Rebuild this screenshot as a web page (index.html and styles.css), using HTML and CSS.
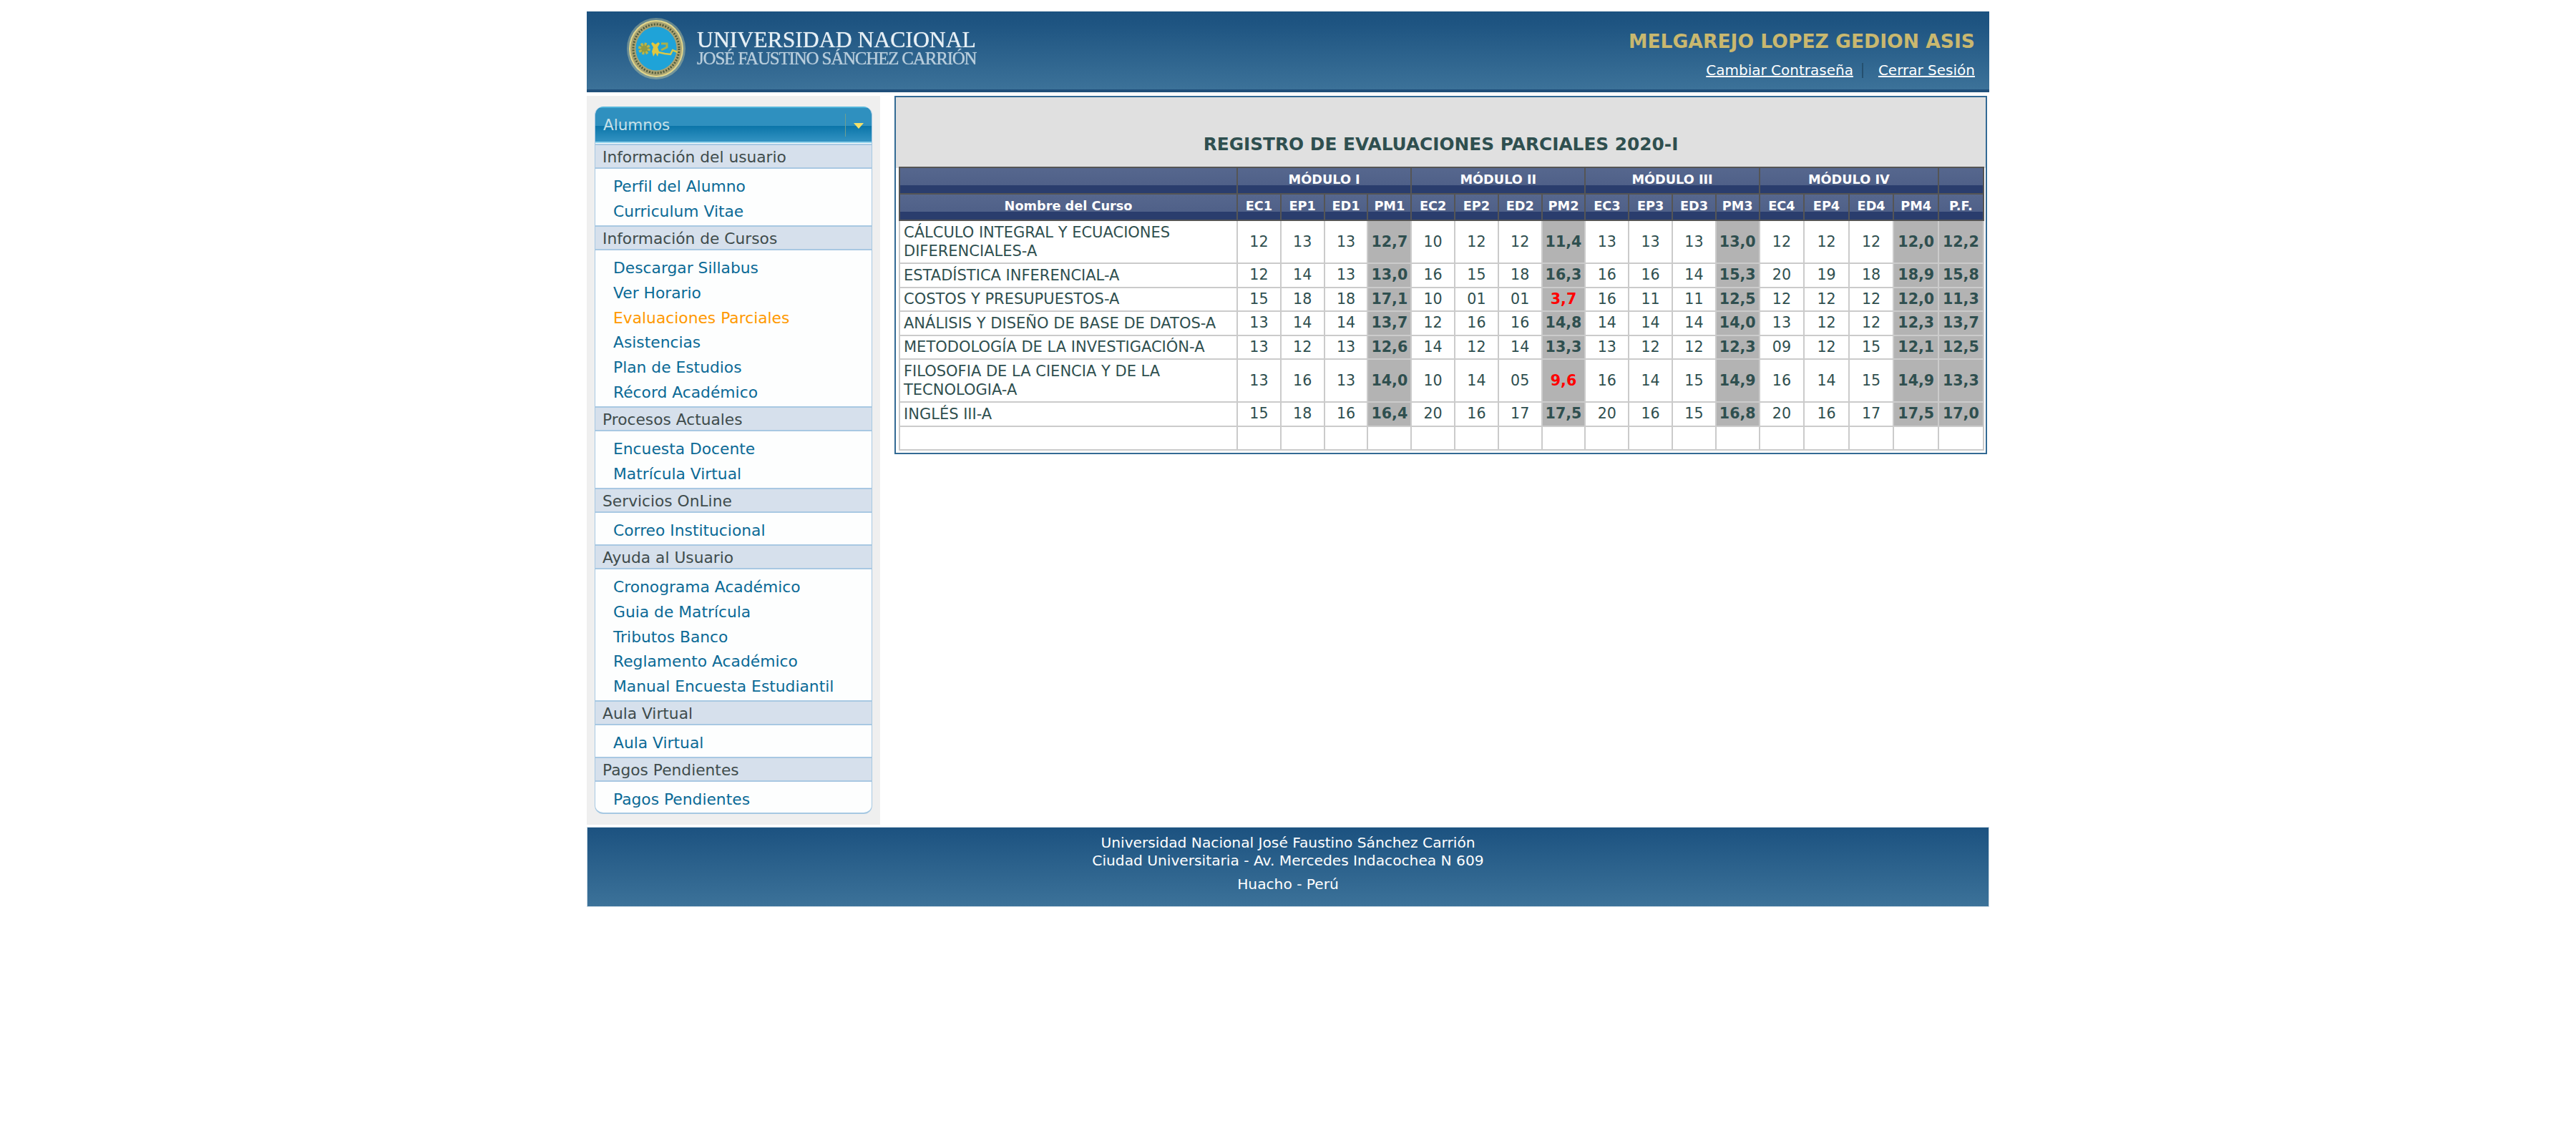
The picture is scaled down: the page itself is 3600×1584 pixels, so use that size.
FILE: index.html
```html
<!DOCTYPE html>
<html lang="es">
<head>
<meta charset="utf-8">
<title>Registro de Evaluaciones Parciales</title>
<link rel="stylesheet" href="styles.css">
</head>
<body>
<div class="page">
  <header class="top">
    <div class="brand">
      <svg class="seal" viewBox="0 0 84 88" width="84" height="88">
        <ellipse cx="42" cy="44" rx="41" ry="43" fill="#efe9a8" opacity=".35"/>
        <ellipse cx="42" cy="44" rx="38" ry="40" fill="#e2d68a"/>
        <ellipse cx="42" cy="44" rx="36" ry="38" fill="#a8a272"/>
        <ellipse cx="42" cy="44" rx="32" ry="34" fill="none" stroke="#4d5a3c" stroke-width="3" stroke-dasharray="2 2"/>
        <ellipse cx="42" cy="44" rx="28.5" ry="30.5" fill="#1fa3d8"/>
        <circle cx="25.5" cy="44" r="6.5" fill="#8f9a45" stroke="#b9b54a" stroke-width="4" stroke-dasharray="3 2"/>
        <path d="M37 35l4 3 4-3 2 2-3 5 2 6-2 7-3-5-3 5-2-7 2-6-3-5z" fill="#e0c63f"/>
        <path d="M49 37h8v5l-8 4" fill="none" stroke="#a9b04a" stroke-width="3"/>
        <path d="M45 49l9 2 8 1 3-6 7 3" fill="none" stroke="#d8c74a" stroke-width="2.5"/>
      </svg>
      <div class="brand-text">
        <div class="brand-one">UNIVERSIDAD NACIONAL</div>
        <div class="brand-two">JOSÉ FAUSTINO SÁNCHEZ CARRIÓN</div>
      </div>
    </div>
    <div class="user">
      <div class="user-name">MELGAREJO LOPEZ GEDION ASIS</div>
      <div class="user-links"><a href="#">Cambiar Contraseña</a><span class="sep"></span><a href="#">Cerrar Sesión</a></div>
    </div>
  </header>

  <div class="body">
    <aside class="side">
      <nav class="menu">
        <div class="menu-head"><span>Alumnos</span><i class="menu-div"></i><i class="menu-arrow"></i></div>
        <div class="sec">Información del usuario</div>
        <ul class="items"><li>Perfil del Alumno</li><li>Curriculum Vitae</li></ul>
        <div class="sec">Información de Cursos</div>
        <ul class="items"><li>Descargar Sillabus</li><li>Ver Horario</li><li class="on">Evaluaciones Parciales</li><li>Asistencias</li><li>Plan de Estudios</li><li>Récord Académico</li></ul>
        <div class="sec">Procesos Actuales</div>
        <ul class="items"><li>Encuesta Docente</li><li>Matrícula Virtual</li></ul>
        <div class="sec">Servicios OnLine</div>
        <ul class="items"><li>Correo Institucional</li></ul>
        <div class="sec">Ayuda al Usuario</div>
        <ul class="items"><li>Cronograma Académico</li><li>Guia de Matrícula</li><li>Tributos Banco</li><li>Reglamento Académico</li><li>Manual Encuesta Estudiantil</li></ul>
        <div class="sec">Aula Virtual</div>
        <ul class="items"><li>Aula Virtual</li></ul>
        <div class="sec">Pagos Pendientes</div>
        <ul class="items last"><li>Pagos Pendientes</li></ul>
      </nav>
    </aside>

    <main class="panel">
      <h1 class="title">REGISTRO DE EVALUACIONES PARCIALES 2020-I</h1>
      <table class="grades">
        <colgroup>
          <col class="c-name">
          <col class="c-a"><col class="c-a"><col class="c-a"><col class="c-a">
          <col class="c-a"><col class="c-a"><col class="c-a"><col class="c-a">
          <col class="c-a"><col class="c-a"><col class="c-a"><col class="c-a">
          <col class="c-b"><col class="c-b"><col class="c-b"><col class="c-b">
          <col class="c-b">
        </colgroup>
        <thead>
          <tr><th></th><th colspan="4">MÓDULO I</th><th colspan="4">MÓDULO II</th><th colspan="4">MÓDULO III</th><th colspan="4">MÓDULO IV</th><th></th></tr>
          <tr><th>Nombre del Curso</th><th>EC1</th><th>EP1</th><th>ED1</th><th>PM1</th><th>EC2</th><th>EP2</th><th>ED2</th><th>PM2</th><th>EC3</th><th>EP3</th><th>ED3</th><th>PM3</th><th>EC4</th><th>EP4</th><th>ED4</th><th>PM4</th><th>P.F.</th></tr>
        </thead>
        <tbody>
          <tr class="tall"><td class="name">CÁLCULO INTEGRAL Y ECUACIONES DIFERENCIALES-A</td><td>12</td><td>13</td><td>13</td><td class="pm">12,7</td><td>10</td><td>12</td><td>12</td><td class="pm">11,4</td><td>13</td><td>13</td><td>13</td><td class="pm">13,0</td><td>12</td><td>12</td><td>12</td><td class="pm">12,0</td><td class="pm">12,2</td></tr>
          <tr><td class="name">ESTADÍSTICA INFERENCIAL-A</td><td>12</td><td>14</td><td>13</td><td class="pm">13,0</td><td>16</td><td>15</td><td>18</td><td class="pm">16,3</td><td>16</td><td>16</td><td>14</td><td class="pm">15,3</td><td>20</td><td>19</td><td>18</td><td class="pm">18,9</td><td class="pm">15,8</td></tr>
          <tr><td class="name">COSTOS Y PRESUPUESTOS-A</td><td>15</td><td>18</td><td>18</td><td class="pm">17,1</td><td>10</td><td>01</td><td>01</td><td class="pm low">3,7</td><td>16</td><td>11</td><td>11</td><td class="pm">12,5</td><td>12</td><td>12</td><td>12</td><td class="pm">12,0</td><td class="pm">11,3</td></tr>
          <tr><td class="name">ANÁLISIS Y DISEÑO DE BASE DE DATOS-A</td><td>13</td><td>14</td><td>14</td><td class="pm">13,7</td><td>12</td><td>16</td><td>16</td><td class="pm">14,8</td><td>14</td><td>14</td><td>14</td><td class="pm">14,0</td><td>13</td><td>12</td><td>12</td><td class="pm">12,3</td><td class="pm">13,7</td></tr>
          <tr><td class="name">METODOLOGÍA DE LA INVESTIGACIÓN-A</td><td>13</td><td>12</td><td>13</td><td class="pm">12,6</td><td>14</td><td>12</td><td>14</td><td class="pm">13,3</td><td>13</td><td>12</td><td>12</td><td class="pm">12,3</td><td>09</td><td>12</td><td>15</td><td class="pm">12,1</td><td class="pm">12,5</td></tr>
          <tr class="tall"><td class="name">FILOSOFIA DE LA CIENCIA Y DE LA TECNOLOGIA-A</td><td>13</td><td>16</td><td>13</td><td class="pm">14,0</td><td>10</td><td>14</td><td>05</td><td class="pm low">9,6</td><td>16</td><td>14</td><td>15</td><td class="pm">14,9</td><td>16</td><td>14</td><td>15</td><td class="pm">14,9</td><td class="pm">13,3</td></tr>
          <tr><td class="name">INGLÉS III-A</td><td>15</td><td>18</td><td>16</td><td class="pm">16,4</td><td>20</td><td>16</td><td>17</td><td class="pm">17,5</td><td>20</td><td>16</td><td>15</td><td class="pm">16,8</td><td>20</td><td>16</td><td>17</td><td class="pm">17,5</td><td class="pm">17,0</td></tr>
          <tr><td class="name"></td><td></td><td></td><td></td><td></td><td></td><td></td><td></td><td></td><td></td><td></td><td></td><td></td><td></td><td></td><td></td><td></td><td></td></tr>
        </tbody>
      </table>
    </main>
  </div>

  <footer class="foot">
    <div>Universidad Nacional José Faustino Sánchez Carrión</div>
    <div>Ciudad Universitaria - Av. Mercedes Indacochea N 609</div>
    <div class="foot-city">Huacho - Perú</div>
  </footer>
</div>
</body>
</html>
```

FILE: styles.css
```css
* { box-sizing: border-box; }
html, body { margin: 0; padding: 0; background: #fff; }
body { font-family: "DejaVu Sans", Verdana, sans-serif; }

.page { width: 1960px; margin: 16px auto 0; }

/* Header */
.top {
  height: 113px;
  display: flex;
  justify-content: space-between;
  background: linear-gradient(#1c5280 0, #1e5481 15%, #3c7299 100%);
  border-bottom: 4px solid #1f4f7a;
  color: #fff;
}
.brand { display: flex; align-items: flex-start; padding: 8px 0 0 55px; }
.seal { display: block; filter: blur(.7px); flex: none; }
.brand-text { margin: 18px 0 0 15px; font-family: "Liberation Serif", serif; filter: blur(.4px); white-space: nowrap; }
.brand-one { font-size: 31.7px; line-height: 28px; color: #e6eff5; text-shadow: 0 0 1px #e6eff5; }
.brand-two { font-size: 25px; line-height: 24px; letter-spacing: -1.2px; color: #b8cddc; text-shadow: 0 0 1px #b8cddc; }
.user { padding: 27px 20px 0 0; text-align: right; }
.user-name { font-weight: 700; font-size: 26.6px; line-height: 30px; color: #c9b86f; white-space: nowrap; }
.user-links { display: flex; justify-content: flex-end; align-items: center; margin-top: 13px; font-size: 20px; line-height: 24px; }
.user-links a { color: #fff; text-decoration: underline; }
.sep { width: 2px; height: 21px; background: #25506f; margin: 0 21px 0 12px; }

/* Layout */
.body { display: flex; align-items: flex-start; margin-top: 5px; }

/* Sidebar */
.side { width: 410px; height: 1019px; padding: 15px 0 0 11px; background: #efefef; flex: none; }
.menu {
  width: 388px;
  background: #fdfefe;
  border-radius: 12px;
  border: solid #a6c8e2;
  border-width: 0 1px 2px;
  overflow: hidden;
}
.menu-head {
  position: relative;
  height: 51px;
  padding: 11px 0 0 11px;
  font-size: 21.5px;
  line-height: 26px;
  color: #c6e0e8;
  background: linear-gradient(#2f90bf 0, #2f90bf 50%, #0a74a8 50%, #3393c2 96%, #93d3ec 96%);
  border-top: 2px solid #4fb3da;
}
.menu-div { position: absolute; left: 349px; top: 8px; width: 1px; height: 32px; background: #6f9f8f; }
.menu-arrow {
  position: absolute; left: 361px; top: 21px;
  border: solid transparent;
  border-width: 8px 7px 0;
  border-top-color: #f3e06a;
}
.sec {
  height: 35px;
  padding: 1px 0 0 10px;
  font-size: 21.75px;
  line-height: 31px;
  color: #3f4c4c;
  background: #d6e0ec;
  border-top: 2px solid #a8c8e2;
  border-bottom: 2px solid #a8c8e2;
}
.menu-head + .sec { margin-top: 1px; }
.items { list-style: none; margin: 0; padding: 7px 0 2px 25px; }
.items.last { padding-bottom: 1px; }
.items li { height: 34.9px; font-size: 21.8px; line-height: 35px; color: #0b6a96; white-space: nowrap; }
.items li.on { color: #ff9900; }

/* Main panel */
.panel {
  width: 1527px;
  height: 501px;
  margin-left: 20px;
  padding: 0 4px;
  background: linear-gradient(#e0e0e0 0, #e0e0e0 99px, #fff 99px);
  border: 2px solid #336a94;
}
.title {
  margin: 0;
  height: 97px;
  padding-top: 50px;
  text-align: center;
  font-size: 24.8px;
  line-height: 32px;
  font-weight: 700;
  color: #2f4f4f;
}

/* Grades table */
.grades {
  width: 1514px;
  table-layout: fixed;
  border-collapse: collapse;
  background: #fff;
}
.c-name { width: 472px; }
.c-a { width: 60.8px; }
.c-b { width: 62.6px; }
.grades th {
  height: 37px;
  padding: 6px 0 0;
  font-size: 17.7px;
  line-height: 20px;
  font-weight: 700;
  color: #fff;
  vertical-align: top;
  white-space: nowrap;
  background: linear-gradient(#56678e 0, #4f6088 70%, #2a3d6d 70%, #2a3d6d 100%);
  border: 2px solid #555;
}
.grades td {
  height: 33.5px;
  padding: 0;
  font-size: 20.6px;
  line-height: 25px;
  text-align: center;
  color: #2f4f4f;
  border: 2px solid #cbcbcb;
}
.grades tr.tall td { height: 60px; }
.grades td.name { padding: 0 5px; text-align: left; font-size: 21px; line-height: 26px; }
.grades td.pm { font-weight: 700; background: #b3b3b3; }
.grades td.low { color: #ff0000; }

/* Footer */
.foot {
  height: 112px;
  margin-top: 3px;
  padding-top: 9px;
  text-align: center;
  font-size: 20.2px;
  line-height: 25px;
  color: #fff;
  background: linear-gradient(#1c5280, #3c7299);
  border: 1px solid #c9d8e3;
}
.foot-city { margin-top: 8px; }
```
